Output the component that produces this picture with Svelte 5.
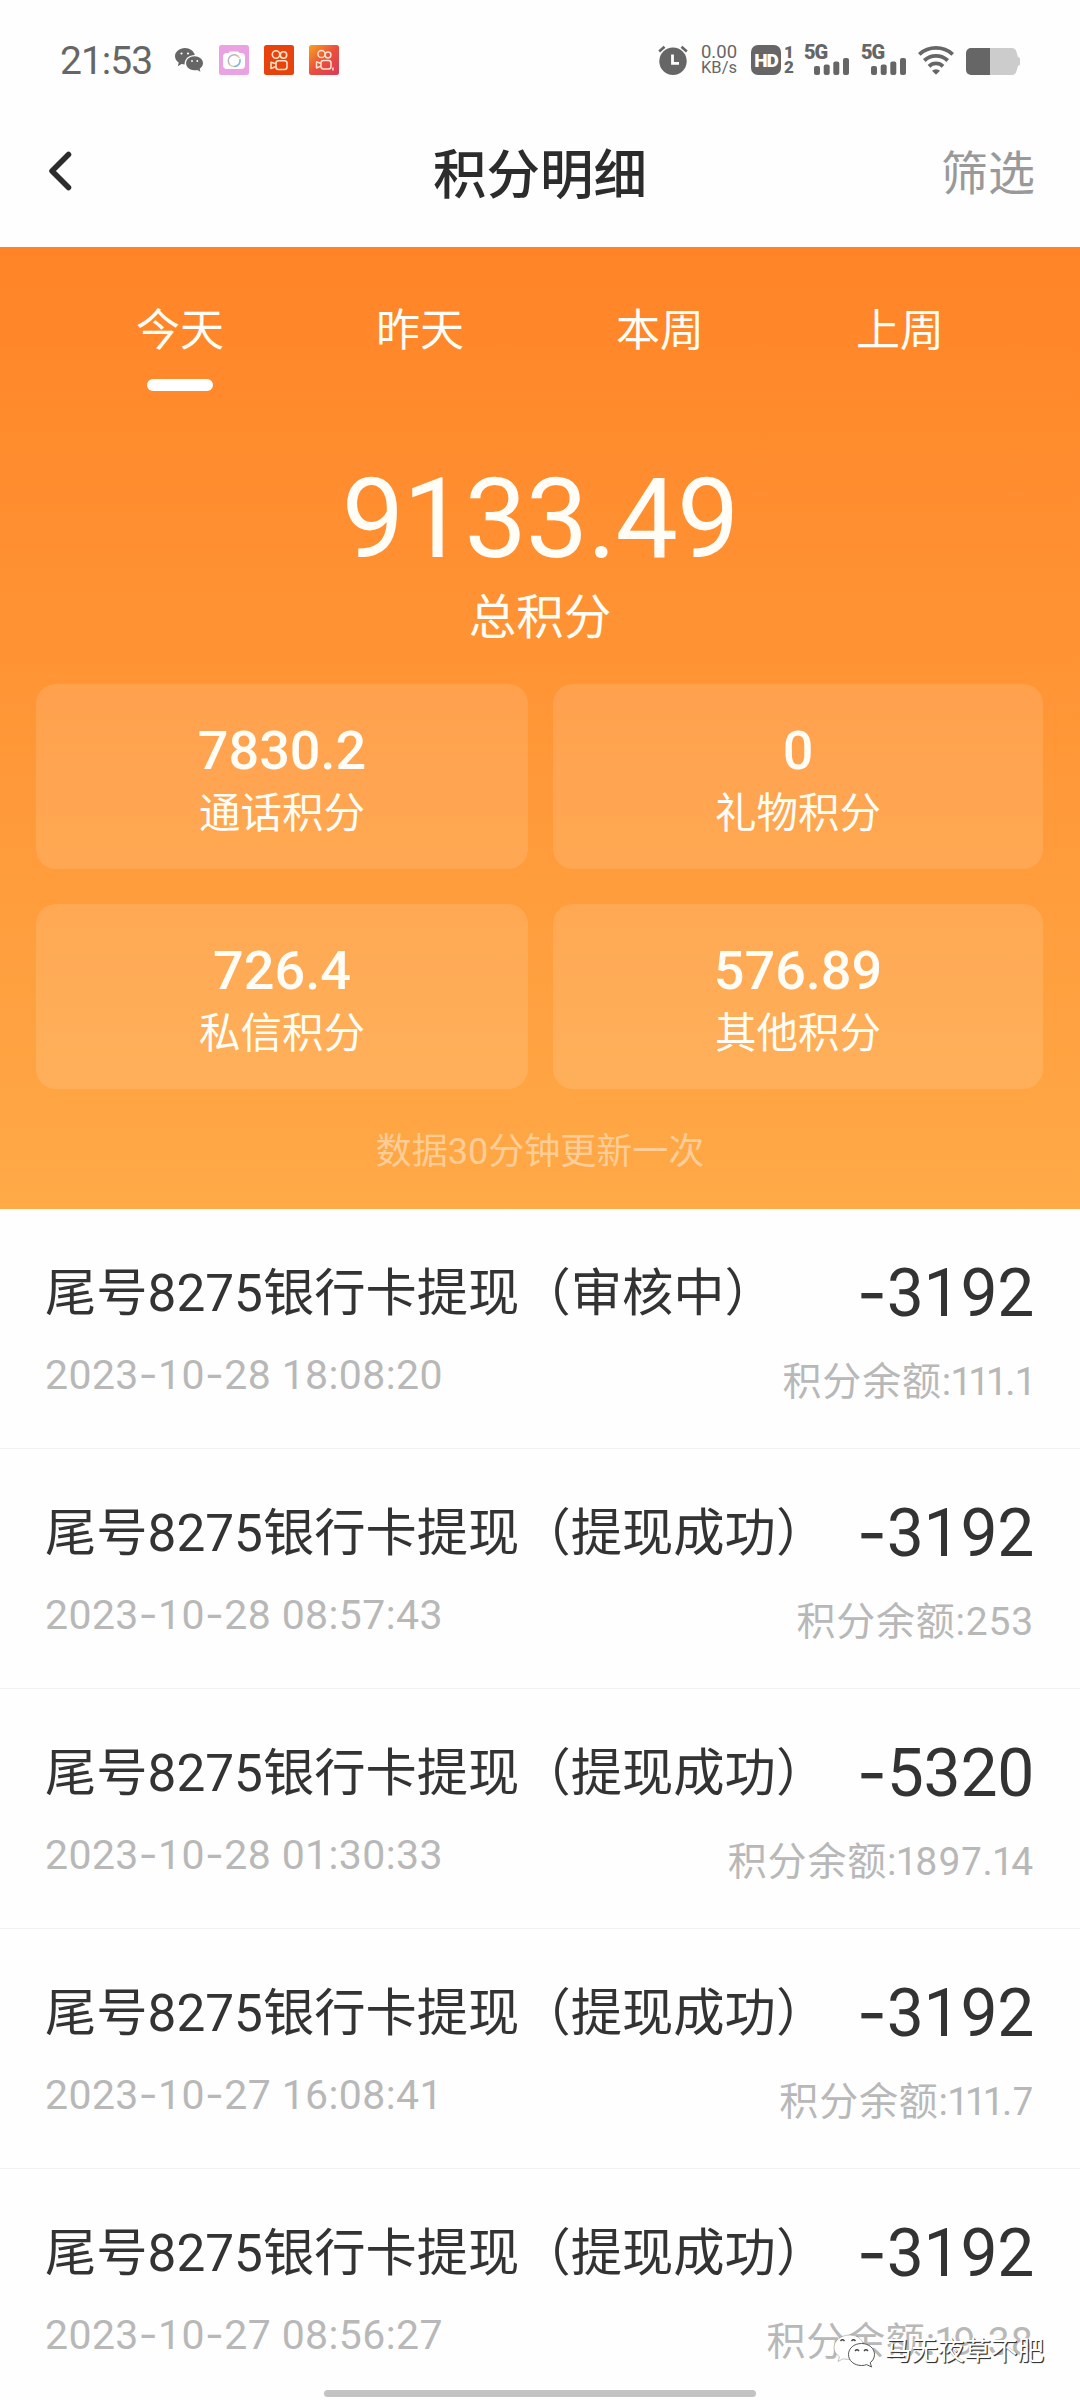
<script>
  const tabs = ["今天", "昨天", "本周", "上周"];
  let activeTab = "今天";

  const total = "9133.49";
  const cards = [
    { value: "7830.2", label: "通话积分" },
    { value: "0", label: "礼物积分" },
    { value: "726.4", label: "私信积分" },
    { value: "576.89", label: "其他积分" },
  ];

  const records = [
    { status: "审核中", time: "2023-10-28 18:08:20", amount: "-3192", balance: "111.1" },
    { status: "提现成功", time: "2023-10-28 08:57:43", amount: "-3192", balance: "253" },
    { status: "提现成功", time: "2023-10-28 01:30:33", amount: "-5320", balance: "1897.14" },
    { status: "提现成功", time: "2023-10-27 16:08:41", amount: "-3192", balance: "111.7" },
    { status: "提现成功", time: "2023-10-27 08:56:27", amount: "-3192", balance: "19.38" },
  ];

  const signals = [1, 2];

  // Split so that the dashes can use a wider glyph than the digits
  function splitDashes(text) {
    return text.split(/(-)/).filter((part) => part !== "");
  }
</script>

<div class="phone">
  <div class="status">
    <div class="status-left">
      <span class="clock">21:53</span>
      <svg class="wechat" viewBox="0 0 28 24" width="28" height="24">
        <path
          fill="#666"
          d="M10 0C4.500 0 0 3.700 0 8.300c0 2.600 1.400 4.800 3.700 6.300l-.9 3.600 3.800-2.100c1 .3 2 .4 3 .4C9.400 10.700 14 7 19.800 7 18.900 3 14.800 0 10 0z"
        />
        <path
          fill="#666"
          d="M19.500 8.300c-4.700 0-8.400 3.100-8.400 7s3.700 7 8.400 7c1 0 2-.2 2.900-.4l3 1.900-.7-3.100c2-1.300 3.300-3.200 3.300-5.400 0-3.900-3.800-7-8.500-7z"
        />
        <g fill="#fff">
          <circle cx="6.500" cy="5.500" r="1.100" />
          <circle cx="13" cy="5.500" r="1.100" />
          <circle cx="17" cy="13" r=".9" />
          <circle cx="22.300" cy="13" r=".9" />
        </g>
      </svg>
      <svg class="app" viewBox="0 0 30 30" width="30" height="30">
        <rect width="30" height="30" rx="2.500" fill="#eba2e2" />
        <path fill="#fff" d="M8 8h1.500L11 6.500h8L20.500 8H22a4 4 0 0 1 4 4v8a4 4 0 0 1-4 4H8a4 4 0 0 1-4-4v-8a4 4 0 0 1 4-4z" />
        <g fill="none" stroke-width="1.600">
          <path d="M11 20a6 6 0 0 1 8.500-8.500" stroke="#b9b6cf" />
          <path d="M20.900 14a6 6 0 0 1-5.900 7.500" stroke="#7cb4dd" />
          <path d="M15 21.500a6 6 0 0 1-4-1.500" stroke="#e3cf92" />
          <path d="M18 10.500l2.500 2.500" stroke="#e3cf92" />
        </g>
      </svg>
      <svg class="app" viewBox="0 0 30 30" width="30" height="30">
        <rect width="30" height="30" rx="2.500" fill="#e8430f" />
        <g fill="none" stroke="#ffe3c4" stroke-width="1.600">
          <circle cx="12" cy="9.500" r="3.700" />
          <circle cx="19.500" cy="10" r="3.200" />
          <rect x="12" y="15.800" width="11" height="8.700" rx="2.500" />
          <path d="M12 18.800l-5-1.600v6.300l5-2" stroke-linejoin="round" />
        </g>
      </svg>
      <svg class="app" viewBox="0 0 30 30" width="30" height="30">
        <defs>
          <linearGradient id="lite" x1="0" y1="0" x2="1" y2="1">
            <stop offset="0" stop-color="#f9a11f" />
            <stop offset=".5" stop-color="#ea4f3c" />
            <stop offset="1" stop-color="#d93a5c" />
          </linearGradient>
        </defs>
        <rect width="30" height="30" rx="2.500" fill="url(#lite)" />
        <g fill="none" stroke="#ffe3d0" stroke-width="1.500">
          <circle cx="12.500" cy="9" r="3.600" />
          <circle cx="19" cy="10" r="2.900" />
          <rect x="12" y="15.500" width="10" height="8.500" rx="2.500" />
          <path d="M12 18.500l-4.500-1.700v6.200l4.500-2" stroke-linejoin="round" />
        </g>
        <path d="M24 22.500v3" stroke="#ffe3d0" stroke-width="1.500" />
      </svg>
    </div>

    <div class="status-right">
      <svg class="alarm" viewBox="0 0 30 30" width="30" height="30">
        <circle cx="15" cy="16.300" r="13.700" fill="#666" />
        <path d="M1.200 6.500l5.300-4.700M28.800 6.500l-5.300-4.700" stroke="#666" stroke-width="2.700" />
        <path d="M14.500 9.500v8.800h6.500" fill="none" stroke="#fff" stroke-width="2.800" />
      </svg>
      <div class="speed">
        <span>0.00</span>
        <small>KB/s</small>
      </div>
      <div class="hd">HD</div>
      <div class="sims">
        <span>1</span>
        <span>2</span>
      </div>
      {#each signals as sim}
        <div class="signal">
          <span>5G</span>
          <svg viewBox="0 0 35 17" width="35" height="17">
            <g fill="#666">
              <rect x="0" y="8" width="6" height="9" rx="2" />
              <rect x="9.700" y="6.500" width="6" height="10.500" rx="2" />
              <rect x="19.300" y="3.500" width="6" height="13.500" rx="2" />
              <rect x="29" y="0" width="6" height="17" rx="2" />
            </g>
          </svg>
        </div>
      {/each}
      <svg class="wifi" viewBox="0 0 36 30" width="36" height="30">
        <g fill="none" stroke="#666" stroke-width="3.800">
          <path d="M1.300 9.300a25 25 0 0 1 33.400 0" />
          <path d="M6.300 15.500a17 17 0 0 1 23.400 0" />
          <path d="M11 21.300a10 10 0 0 1 14 0" />
        </g>
        <path d="M18 29.800l-4-4a5.800 5.800 0 0 1 8 0z" fill="#666" />
      </svg>
      <svg class="battery" viewBox="0 0 54 27" width="54" height="27">
        <path d="M24 0h22a5 5 0 0 1 4.500 4L52 9q2 .5 2 2v5q0 1.500-2 2l-1.500 5a5 5 0 0 1-4.500 4H24z" fill="#ccc" />
        <path d="M24 0H5a5 5 0 0 0-5 5v17a5 5 0 0 0 5 5h19z" fill="#666" />
      </svg>
    </div>
  </div>

  <header>
    <svg class="back" viewBox="0 0 24 40" width="24" height="40">
      <path
        d="M20.500 3.500L4 20l16.500 16.500"
        fill="none"
        stroke="#2c2c2c"
        stroke-width="5.500"
        stroke-linecap="round"
        stroke-linejoin="round"
      />
    </svg>
    <h1>积分明细</h1>
    <span class="filter">筛选</span>
  </header>

  <section class="summary">
    <nav>
      {#each tabs as tab}
        <button class:active={tab === activeTab} on:click={() => (activeTab = tab)}>{tab}</button>
      {/each}
    </nav>
    <div class="total">{total}</div>
    <div class="total-label">总积分</div>
    <div class="cards">
      {#each cards as card}
        <div class="card">
          <strong>{card.value}</strong>
          <span>{card.label}</span>
        </div>
      {/each}
    </div>
    <p class="hint">数据30分钟更新一次</p>
  </section>

  <ul>
    {#each records as record}
      <li>
        <div class="row">
          <div class="name">尾号8275银行卡提现（{record.status}）</div>
          <div class="amount">
            {#each splitDashes(record.amount) as part}<span class:dash={part === "-"}>{part}</span>{/each}
          </div>
        </div>
        <div class="row">
          <div class="time">
            {#each splitDashes(record.time) as part}<span class:dash={part === "-"}>{part}</span>{/each}
          </div>
          <div class="balance">积分余额:{record.balance}</div>
        </div>
      </li>
    {/each}
  </ul>

  <div class="watermark">
    <svg viewBox="0 0 44 34" width="44" height="34">
      <g fill="#fff" stroke="#555" stroke-width="1">
        <path d="M17 1C8 1 1 6.500 1 13.500c0 4 2 7 5.500 9.300L5 27.500l5-2.700c9 2 20-2 21-11C31 6.500 25 1 17 1z" stroke-opacity=".35" />
        <path d="M28.500 9.500c-7.500 0-13 4.900-13 11s5.500 11 13 11c2 0 3.600-.3 5.200-.9l4.800 2.400-1.300-4.300c2.600-2 4.300-4.900 4.300-8.200 0-6.100-5.500-11-13-11z" />
      </g>
      <path
        d="M7.500 7q2-2.500 4 0M18.500 7q2-2.500 4 0M22 17q2-2.500 4 0M31 17q2-2.500 4 0"
        fill="none"
        stroke="#444"
        stroke-width="1.300"
      />
    </svg>
    <span>马无夜草不肥</span>
  </div>
  <div class="home-bar"></div>
</div>

<style>
  :global(body) {
    margin: 0;
    background: #fefefe;
  }

  .phone {
    position: relative;
    width: 1080px;
    height: 2400px;
    overflow: hidden;
    background: #fefefe;
    color: #333;
    font-family: Roboto, "Noto Sans CJK SC", sans-serif;
  }

  /* Status bar */
  .status {
    display: flex;
    justify-content: space-between;
    height: 75px;
    padding: 0 60px;
    align-items: flex-end;
    color: #666;
  }

  .status-left,
  .status-right {
    display: flex;
    align-items: flex-end;
  }

  .clock {
    width: 114px;
    font-size: 39px;
    line-height: 28px;
    letter-spacing: -1px;
  }

  .wechat {
    margin: 0 16px 3px 1px;
  }

  .app {
    margin-right: 15px;
  }

  .alarm {
    margin-right: 11px;
  }

  .speed {
    display: flex;
    flex-direction: column;
    width: 40px;
    margin-right: 12px;
    text-align: center;
    font-size: 18.500px;
    line-height: 15px;
  }

  .speed small {
    font-size: 16.500px;
    line-height: 15px;
  }

  .hd {
    width: 30px;
    height: 30px;
    border-radius: 7px;
    background: #666;
    color: #fff;
    font-size: 19px;
    font-weight: 900;
    line-height: 31px;
    text-align: center;
    letter-spacing: -1px;
  }

  .sims {
    display: flex;
    flex-direction: column;
    width: 12px;
    margin: 0 8px 0 3px;
    font-size: 17px;
    font-weight: 900;
    line-height: 15px;
  }

  .signal {
    display: flex;
    flex-direction: column;
    width: 45px;
    height: 30px;
    margin-right: 12px;
  }

  .signal span {
    height: 13px;
    font-size: 20px;
    font-weight: 900;
    line-height: 14px;
    letter-spacing: -1px;
  }

  .signal svg {
    align-self: flex-end;
  }

  .battery {
    margin-left: 12px;
  }

  /* Title bar */
  header {
    display: grid;
    grid-template-columns: 1fr auto 1fr;
    align-items: center;
    height: 172px;
    padding: 20px 45px 0 48px;
    box-sizing: border-box;
  }

  h1 {
    margin: 0;
    padding: 10px 3px 0 0;
    color: #2c2c2c;
    font-size: 53.500px;
    font-weight: 500;
    line-height: 60px;
  }

  .filter {
    justify-self: end;
    padding-top: 6px;
    color: #999;
    font-size: 47px;
    line-height: 60px;
  }

  /* Summary */
  .summary {
    height: 962px;
    background: linear-gradient(#ff8427, #ffa947);
    color: #fffdf5;
    text-align: center;
    overflow: hidden;
  }

  nav {
    display: flex;
    padding: 54px 60px 0;
  }

  button {
    display: flex;
    flex-direction: column;
    align-items: center;
    width: 240px;
    height: 90px;
    padding: 0;
    border: none;
    background: none;
    color: inherit;
    font: inherit;
    font-size: 44px;
    line-height: 60px;
    cursor: pointer;
  }

  .active::after {
    content: "";
    width: 66px;
    height: 12px;
    margin-top: 18px;
    border-radius: 6px;
    background: #fff;
  }

  .total {
    margin-top: 68px;
    font-size: 111px;
    line-height: 120px;
    letter-spacing: -1px;
  }

  .total-label {
    margin-top: 9px;
    font-size: 47.500px;
    line-height: 60px;
  }

  .cards {
    display: grid;
    grid-template-columns: 492px 490px;
    grid-auto-rows: 185px;
    gap: 35px 25px;
    margin: 36px 0 0 36px;
  }

  .card {
    display: flex;
    flex-direction: column;
    padding-top: 36px;
    border-radius: 20px;
    background: rgba(255, 255, 255, 0.12);
  }

  .card strong {
    font-size: 54px;
    font-weight: 500;
    line-height: 62px;
  }

  .card span {
    margin-top: 2px;
    font-size: 41.500px;
    line-height: 60px;
  }

  .hint {
    margin: 36px 0 0;
    color: rgba(255, 255, 255, 0.45);
    font-size: 36px;
    line-height: 54px;
  }

  /* Records */
  ul {
    margin: 0;
    padding: 0;
    list-style: none;
  }

  li {
    height: 240px;
    padding: 53px 46px 0 45px;
    box-sizing: border-box;
    border-bottom: 1px solid #f1f1f1;
    white-space: nowrap;
  }

  .row {
    display: flex;
    justify-content: space-between;
  }

  .name {
    padding-top: 2px;
    font-size: 51.300px;
    line-height: 60px;
  }

  .time {
    margin-top: 20px;
    color: #b8b8b8;
    font-size: 41px;
    line-height: 60px;
    letter-spacing: 0.4px;
  }

  .dash {
    font-family: Inter, sans-serif;
  }

  .amount {
    font-size: 66px;
    line-height: 60px;
    letter-spacing: -0.3px;
  }

  .balance {
    margin-top: 28px;
    color: #b8b8b8;
    font-size: 39px;
    line-height: 60px;
    letter-spacing: 0.8px;
    font-variant-numeric: proportional-nums;
  }

  .watermark {
    position: absolute;
    left: 833px;
    top: 2334px;
    display: flex;
    align-items: center;
    gap: 8px;
    color: #fff;
    font-size: 26.500px;
    line-height: 34px;
    text-shadow: 1px 1px 1px #333, 1px 1px 0 #555;
    white-space: nowrap;
  }

  .home-bar {
    position: absolute;
    left: 324px;
    top: 2390px;
    width: 432px;
    height: 7px;
    border-radius: 4px;
    background: #c3c3c3;
  }
</style>
